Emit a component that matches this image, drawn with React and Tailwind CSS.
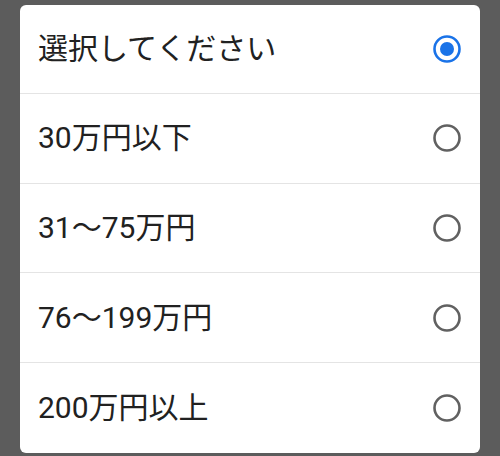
import { useState } from 'react';

const options = ['選択してください', '30万円以下', '31〜75万円', '76〜199万円', '200万円以上'];

const Radio = ({ checked }) => (
    <svg width="30" height="30" viewBox="0 0 30 30">
        <circle
            cx="15"
            cy="15"
            r="12.5"
            fill="none"
            stroke={checked ? '#1a73e8' : '#616161'}
            strokeWidth="2.6"
        />
        {checked && <circle cx="15" cy="15" r="7" fill="#1a73e8" />}
    </svg>
);

const App = () => {
    const [selected, setSelected] = useState(0);

    return (
        <div className="w-[500px] h-[456px] bg-[#5c5c5c] overflow-hidden pt-[5px] pl-[20px]">
            <div
                className="w-[460px] h-[448px] bg-white rounded-[6px] flex flex-col text-[#212121]"
                style={{ fontFamily: 'Roboto, "Noto Sans CJK JP", sans-serif' }}
            >
                {options.map((label, i) => (
                    <button
                        key={label}
                        onClick={() => setSelected(i)}
                        className={`flex items-center justify-between pl-[18px] pr-[18px] text-left ${
                            i === 0 ? 'h-[89px]' : 'h-[90px]'
                        } ${i < options.length - 1 ? 'border-b border-[#e4e4e4]' : ''}`}
                    >
                        <span className="text-[30px] leading-none">{label}</span>
                        <Radio checked={selected === i} />
                    </button>
                ))}
            </div>
        </div>
    );
};

export default App;
